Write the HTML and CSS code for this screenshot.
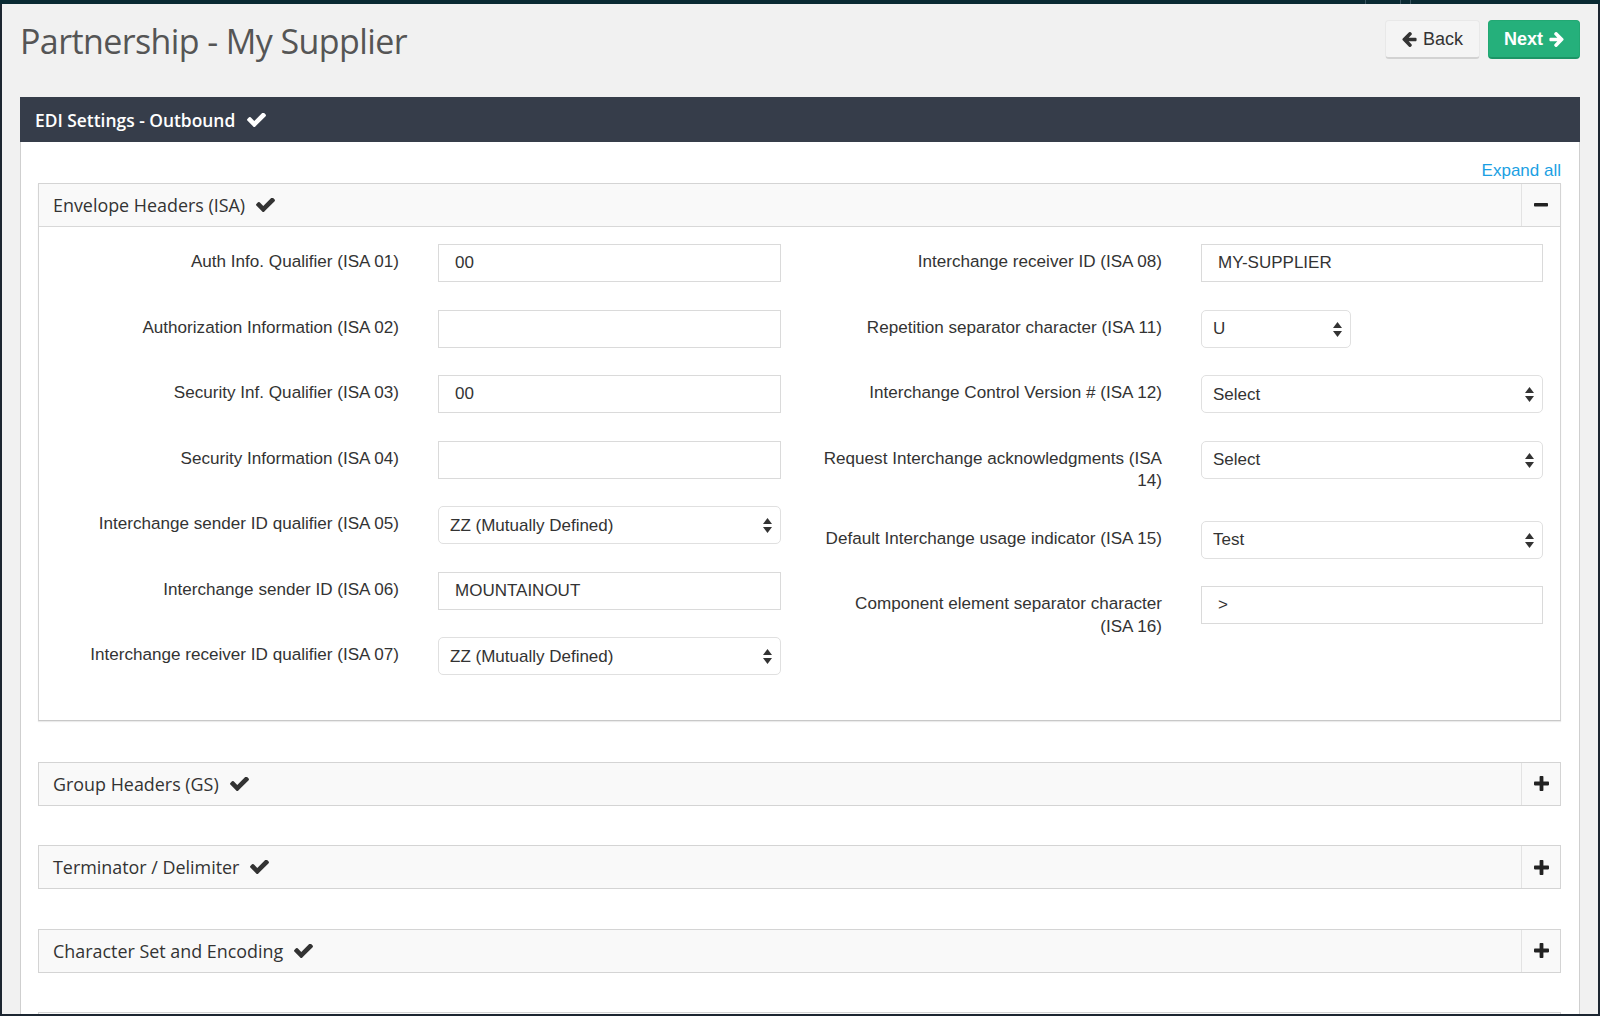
FILE: index.html
```html
<!DOCTYPE html>
<html lang="en">
<head>
<meta charset="utf-8">
<title>Partnership - My Supplier</title>
<link rel="stylesheet" href="styles.css">
</head>
<body>
<div class="topbar">
  <div class="tb-fill"></div>
  <div class="tb-cell tb-a"></div>
  <div class="tb-cell tb-b"></div>
  <div class="tb-cell tb-c"></div>
</div>
<div class="window">
  <div class="page">
    <header class="page-header">
      <h1 class="title">Partnership - My Supplier</h1>
      <div class="actions">
        <button class="btn btn-back" type="button">
          <svg class="arrow" viewBox="192 181 1472 1558"><path d="M1664 896v128q0 53-32.5 90.5t-84.5 37.5h-704l293 294q38 36 38 90t-38 90l-75 76q-37 37-90 37-52 0-91-37l-651-652q-37-37-37-90 0-52 37-91l651-650q38-38 91-38 52 0 90 38l75 74q38 38 38 91t-38 91l-293 293h704q52 0 84.5 37.5t32.5 90.5z"/></svg>
          <span>Back</span>
        </button>
        <button class="btn btn-next" type="button">
          <span>Next</span>
          <svg class="arrow arrow-right" viewBox="192 181 1472 1558"><path d="M1664 896v128q0 53-32.5 90.5t-84.5 37.5h-704l293 294q38 36 38 90t-38 90l-75 76q-37 37-90 37-52 0-91-37l-651-652q-37-37-37-90 0-52 37-91l651-650q38-38 91-38 52 0 90 38l75 74q38 38 38 91t-38 91l-293 293h704q52 0 84.5 37.5t32.5 90.5z"/></svg>
        </button>
      </div>
    </header>

    <div class="section-bar">
      <span>EDI Settings - Outbound</span>
      <svg class="check check-white" viewBox="120 400 1552 1090"><path d="M1671 566q0 40-28 68l-724 724-136 136q-28 28-68 28t-68-28l-136-136-362-362q-28-28-28-68t28-68l136-136q28-28 68-28t68 28l294 295 656-657q28-28 68-28t68 28l136 136q28 28 28 68z"/></svg>
    </div>

    <div class="card">
      <div class="expand-row"><a class="expand-link" href="#">Expand all</a></div>

      <div class="panel panel-open">
        <div class="panel-heading">
          <div class="panel-title">
            <span>Envelope Headers (ISA)</span>
            <svg class="check" viewBox="120 400 1552 1090"><path d="M1671 566q0 40-28 68l-724 724-136 136q-28 28-68 28t-68-28l-136-136-362-362q-28-28-28-68t28-68l136-136q28-28 68-28t68 28l294 295 656-657q28-28 68-28t68 28l136 136q28 28 28 68z"/></svg>
          </div>
          <button class="toggle" type="button" aria-label="Collapse">
            <svg class="minus" viewBox="0 0 14 4"><rect x="0" y="0" width="14" height="3.6" rx="0.8"/></svg>
          </button>
        </div>
        <div class="panel-body">
          <div class="col col-a">
            <div class="form-row">
              <label class="lbl">Auth Info. Qualifier (ISA 01)</label>
              <input class="field" type="text" value="00">
            </div>
            <div class="form-row">
              <label class="lbl">Authorization Information (ISA 02)</label>
              <input class="field" type="text" value="">
            </div>
            <div class="form-row">
              <label class="lbl">Security Inf. Qualifier (ISA 03)</label>
              <input class="field" type="text" value="00">
            </div>
            <div class="form-row">
              <label class="lbl">Security Information (ISA 04)</label>
              <input class="field" type="text" value="">
            </div>
            <div class="form-row">
              <label class="lbl">Interchange sender ID qualifier (ISA 05)</label>
              <div class="select-wrap">
                <select class="sel"><option>ZZ (Mutually Defined)</option></select>
                <svg class="sel-arrows" viewBox="0 0 9 15"><polygon points="0,6 4.5,0 9,6"/><polygon points="0,9 9,9 4.5,15"/></svg>
              </div>
            </div>
            <div class="form-row">
              <label class="lbl">Interchange sender ID (ISA 06)</label>
              <input class="field" type="text" value="MOUNTAINOUT">
            </div>
            <div class="form-row">
              <label class="lbl">Interchange receiver ID qualifier (ISA 07)</label>
              <div class="select-wrap">
                <select class="sel"><option>ZZ (Mutually Defined)</option></select>
                <svg class="sel-arrows" viewBox="0 0 9 15"><polygon points="0,6 4.5,0 9,6"/><polygon points="0,9 9,9 4.5,15"/></svg>
              </div>
            </div>
          </div>

          <div class="col col-b">
            <div class="form-row">
              <label class="lbl">Interchange receiver ID (ISA 08)</label>
              <input class="field" type="text" value="MY-SUPPLIER">
            </div>
            <div class="form-row">
              <label class="lbl">Repetition separator character (ISA 11)</label>
              <div class="select-wrap select-short">
                <select class="sel"><option>U</option></select>
                <svg class="sel-arrows" viewBox="0 0 9 15"><polygon points="0,6 4.5,0 9,6"/><polygon points="0,9 9,9 4.5,15"/></svg>
              </div>
            </div>
            <div class="form-row">
              <label class="lbl">Interchange Control Version # (ISA 12)</label>
              <div class="select-wrap">
                <select class="sel"><option>Select</option></select>
                <svg class="sel-arrows" viewBox="0 0 9 15"><polygon points="0,6 4.5,0 9,6"/><polygon points="0,9 9,9 4.5,15"/></svg>
              </div>
            </div>
            <div class="form-row">
              <label class="lbl">Request Interchange acknowledgments (ISA 14)</label>
              <div class="select-wrap">
                <select class="sel"><option>Select</option></select>
                <svg class="sel-arrows" viewBox="0 0 9 15"><polygon points="0,6 4.5,0 9,6"/><polygon points="0,9 9,9 4.5,15"/></svg>
              </div>
            </div>
            <div class="form-row">
              <label class="lbl">Default Interchange usage indicator (ISA 15)</label>
              <div class="select-wrap">
                <select class="sel"><option>Test</option></select>
                <svg class="sel-arrows" viewBox="0 0 9 15"><polygon points="0,6 4.5,0 9,6"/><polygon points="0,9 9,9 4.5,15"/></svg>
              </div>
            </div>
            <div class="form-row">
              <label class="lbl">Component element separator character (ISA 16)</label>
              <input class="field" type="text" value="&gt;">
            </div>
          </div>
        </div>
      </div>

      <div class="panel panel-closed">
        <div class="panel-heading">
          <div class="panel-title">
            <span>Group Headers (GS)</span>
            <svg class="check" viewBox="120 400 1552 1090"><path d="M1671 566q0 40-28 68l-724 724-136 136q-28 28-68 28t-68-28l-136-136-362-362q-28-28-28-68t28-68l136-136q28-28 68-28t68 28l294 295 656-657q28-28 68-28t68 28l136 136q28 28 28 68z"/></svg>
          </div>
          <button class="toggle" type="button" aria-label="Expand">
            <svg class="plus" viewBox="0 0 15 15"><rect x="5.6" y="0" width="3.8" height="15" rx="0.8"/><rect x="0" y="5.6" width="15" height="3.8" rx="0.8"/></svg>
          </button>
        </div>
      </div>

      <div class="panel panel-closed">
        <div class="panel-heading">
          <div class="panel-title">
            <span>Terminator / Delimiter</span>
            <svg class="check" viewBox="120 400 1552 1090"><path d="M1671 566q0 40-28 68l-724 724-136 136q-28 28-68 28t-68-28l-136-136-362-362q-28-28-28-68t28-68l136-136q28-28 68-28t68 28l294 295 656-657q28-28 68-28t68 28l136 136q28 28 28 68z"/></svg>
          </div>
          <button class="toggle" type="button" aria-label="Expand">
            <svg class="plus" viewBox="0 0 15 15"><rect x="5.6" y="0" width="3.8" height="15" rx="0.8"/><rect x="0" y="5.6" width="15" height="3.8" rx="0.8"/></svg>
          </button>
        </div>
      </div>

      <div class="panel panel-closed">
        <div class="panel-heading">
          <div class="panel-title">
            <span>Character Set and Encoding</span>
            <svg class="check" viewBox="120 400 1552 1090"><path d="M1671 566q0 40-28 68l-724 724-136 136q-28 28-68 28t-68-28l-136-136-362-362q-28-28-28-68t28-68l136-136q28-28 68-28t68 28l294 295 656-657q28-28 68-28t68 28l136 136q28 28 28 68z"/></svg>
          </div>
          <button class="toggle" type="button" aria-label="Expand">
            <svg class="plus" viewBox="0 0 15 15"><rect x="5.6" y="0" width="3.8" height="15" rx="0.8"/><rect x="0" y="5.6" width="15" height="3.8" rx="0.8"/></svg>
          </button>
        </div>
      </div>

      <div class="panel panel-closed">
        <div class="panel-heading">
          <div class="panel-title"><span>&nbsp;</span></div>
        </div>
      </div>
    </div>
  </div>
</div>
</body>
</html>
```

FILE: styles.css
```css
* { box-sizing: border-box; }

html, body {
  margin: 0;
  padding: 0;
  height: 1016px;
  overflow: hidden;
}

body {
  background: #f1f1f1;
  font-family: "Liberation Sans", Arial, sans-serif;
  color: #333;
}

.topbar {
  display: flex;
  height: 4px;
  background: #0a2a33;
}
.tb-fill { flex: 1; }
.tb-cell { border-left: 1px solid #3a5560; }
.tb-a { width: 35px; }
.tb-b { width: 10px; }
.tb-c { width: 190px; }

.window {
  height: 1012px;
  border-left: 2px solid #1c2631;
  border-right: 2px solid #1c2631;
  border-bottom: 2px solid #1c2631;
  background: #f1f1f1;
  overflow: hidden;
}

.page {
  padding: 0 18px;
}

.page-header {
  display: flex;
  justify-content: space-between;
  align-items: flex-start;
  height: 93px;
}

.title {
  margin: 17px 0 0 0;
  font-family: "Open Sans", sans-serif;
  font-weight: 400;
  font-size: 34px;
  line-height: 40px;
  color: #555;
  letter-spacing: -0.6px;
}

.actions {
  display: flex;
  gap: 8px;
  margin-top: 16px;
}

.btn {
  display: flex;
  align-items: center;
  justify-content: center;
  gap: 6px;
  height: 39px;
  border-radius: 4px;
  font-family: "Liberation Sans", Arial, sans-serif;
  font-size: 18px;
  padding: 0;
  cursor: pointer;
}

.btn-back {
  width: 95px;
  background: #f4f4f4;
  color: #333;
  border: 1px solid #e8e8e8;
  border-bottom: 2px solid #d2d2d2;
}
.btn-back .arrow { fill: #333; }

.btn-next {
  width: 92px;
  background: #25b07b;
  color: #fff;
  font-weight: 700;
  border: 1px solid #22a873;
  border-bottom: 2px solid #1c9566;
}
.btn-next .arrow { fill: #fff; }

.arrow {
  width: 15px;
  height: 15px;
}
.arrow-right { transform: scaleX(-1); }

.section-bar {
  display: flex;
  align-items: center;
  gap: 12px;
  height: 45px;
  padding-left: 15px;
  background: #363d4a;
  color: #fff;
  font-family: "Open Sans", sans-serif;
  font-weight: 600;
  font-size: 17.4px;
}

.check {
  width: 19px;
  height: 14px;
  fill: #333;
}
.check-white { fill: #fff; }

.card {
  background: #fff;
  border-left: 1px solid #cfcfcf;
  border-right: 1px solid #cfcfcf;
  padding: 17px 18px 0 17px;
  min-height: 900px;
}

.expand-row {
  text-align: right;
  height: 23px;
  line-height: 23px;
  margin-bottom: 1px;
}
.expand-link {
  color: #1b9fe3;
  text-decoration: none;
  font-size: 17px;
}

.panel {
  border: 1px solid #d4d4d4;
  background: #fff;
}

.panel-open {
  border-bottom-color: #c8c8c8;
  box-shadow: 0 1px 1px rgba(0, 0, 0, 0.08);
  margin-bottom: 41px;
}

.panel-closed {
  margin-bottom: 39.5px;
}

.panel-heading {
  display: flex;
  align-items: stretch;
  height: 42px;
  background: #f9f9f9;
}
.panel-open .panel-heading {
  height: 43px;
  border-bottom: 1px solid #d8d8d8;
}

.panel-title {
  flex: 1;
  display: flex;
  align-items: center;
  gap: 11px;
  padding-left: 14px;
  font-family: "Open Sans", sans-serif;
  font-size: 17.9px;
  color: #333;
}

.toggle {
  width: 39px;
  border: none;
  border-left: 1px solid #e3e3e3;
  background: #f9f9f9;
  display: flex;
  align-items: center;
  justify-content: center;
  padding: 0;
}
.minus { width: 14px; height: 4px; fill: #222; }
.plus { width: 15px; height: 15px; fill: #222; }

.panel-body {
  display: flex;
  padding: 17px 0 17px 0;
}

.col { display: flex; flex-direction: column; }
.col-a { width: 762px; padding-right: 20px; }
.col-b { flex: 1; padding-right: 17px; padding-left: 1px; }

.form-row {
  display: grid;
  grid-template-columns: 360px 1fr;
  column-gap: 39px;
  align-items: start;
  margin-bottom: 27.5px;
}

.lbl {
  text-align: right;
  padding: 7px 0 0 20px;
  font-size: 17.1px;
  line-height: 22.8px;
  color: #333;
}

.field {
  height: 38px;
  width: 100%;
  border: 1px solid #dadada;
  border-radius: 0;
  padding: 0 16px;
  font-family: "Liberation Sans", Arial, sans-serif;
  font-size: 17px;
  color: #333;
  background: #fff;
  outline: none;
}

.select-wrap {
  position: relative;
  width: 100%;
}
.select-short { width: 150px; }

.sel {
  appearance: none;
  -webkit-appearance: none;
  width: 100%;
  height: 38px;
  border: 1px solid #e0e0e0;
  border-radius: 5px;
  background: #fff;
  padding: 0 30px 0 11px;
  font-family: "Liberation Sans", Arial, sans-serif;
  font-size: 17px;
  color: #333;
  outline: none;
}

.sel-arrows {
  position: absolute;
  right: 9px;
  top: 12px;
  width: 9px;
  height: 15px;
  fill: #333;
  pointer-events: none;
}
```
